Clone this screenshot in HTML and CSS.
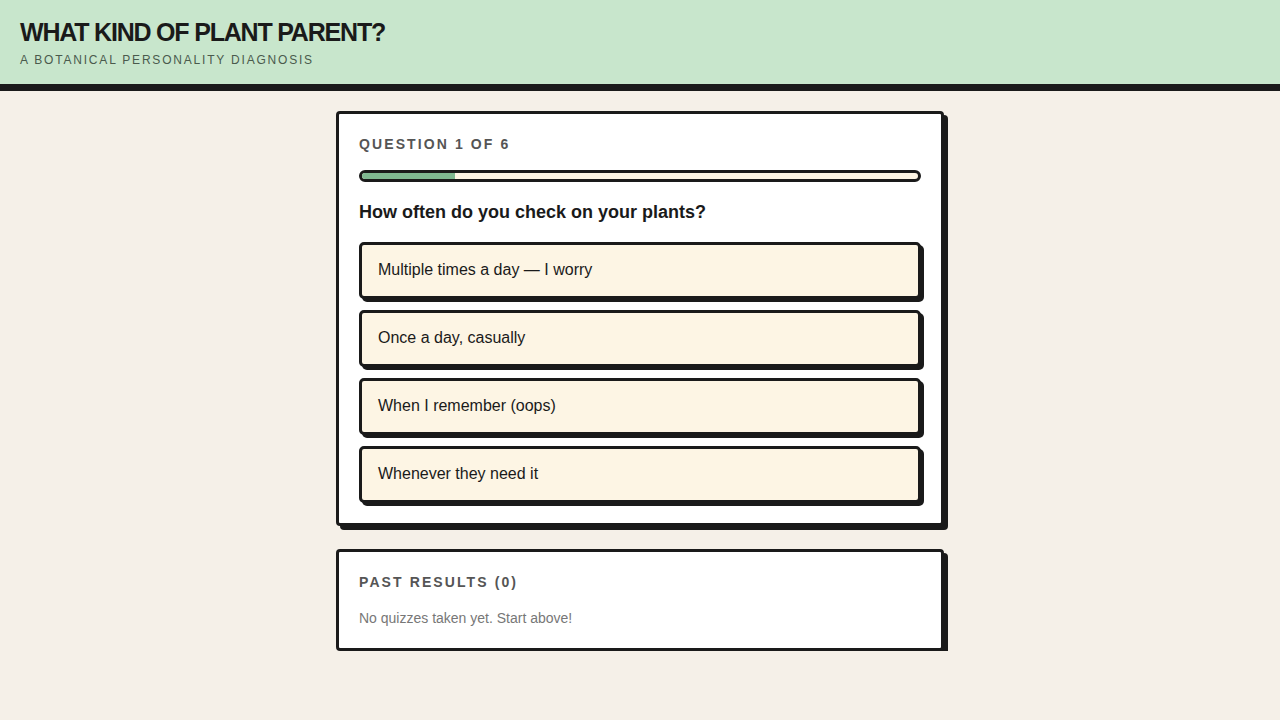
FILE: index.html
```html
<!DOCTYPE html>
<html lang="en">
<head>
<meta charset="utf-8">
<title>What Kind of Plant Parent?</title>
<link rel="stylesheet" href="styles.css">
</head>
<body>
<header class="site-header">
  <h1 class="title">WHAT KIND OF PLANT PARENT?</h1>
  <p class="subtitle">A BOTANICAL PERSONALITY DIAGNOSIS</p>
</header>
<main class="main">
  <section class="card">
    <div class="label">QUESTION 1 OF 6</div>
    <div class="progress"><div class="progress-fill" style="width:16.67%"></div></div>
    <h2 class="question">How often do you check on your plants?</h2>
    <div class="options">
      <button class="option">Multiple times a day — I worry</button>
      <button class="option">Once a day, casually</button>
      <button class="option">When I remember (oops)</button>
      <button class="option">Whenever they need it</button>
    </div>
  </section>
  <section class="card">
    <div class="label">PAST RESULTS (0)</div>
    <p class="empty">No quizzes taken yet. Start above!</p>
  </section>
</main>
</body>
</html>
```

FILE: styles.css
```css
* { box-sizing: border-box; }
html, body { margin: 0; padding: 0; }
body {
  background: #f5f0e8;
  font-family: "Liberation Sans", Arial, sans-serif;
  color: #1a1a1a;
}
.site-header {
  background: #c8e6cc;
  height: 91px;
  border-bottom: 7px solid #1a1a1a;
  padding: 17px 20px 0;
}
.title {
  margin: 0;
  font-size: 25px;
  line-height: 30px;
  font-weight: 700;
  letter-spacing: -1.2px;
  color: #1a1a1a;
}
.subtitle {
  margin: 5px 0 0;
  font-size: 12px;
  line-height: 16px;
  letter-spacing: 1.8px;
  color: #4a5a4c;
}
.main {
  width: 608px;
  margin: 20px auto 0;
  display: flex;
  flex-direction: column;
  gap: 23px;
}
.card {
  background: #ffffff;
  border: 3px solid #1a1a1a;
  border-radius: 4px;
  box-shadow: 4px 4px 0 #1a1a1a;
  padding: 20px;
}
.label {
  font-size: 14px;
  line-height: 20px;
  font-weight: 700;
  letter-spacing: 0.15em;
  color: #555555;
  margin-bottom: 16px;
}
.progress {
  height: 12px;
  border: 3px solid #1a1a1a;
  border-radius: 6px;
  background: #fdf5e4;
  overflow: hidden;
}
.progress-fill {
  height: 100%;
  background: #7fb890;
}
.question {
  margin: 19px 0 19px;
  font-size: 18px;
  line-height: 22px;
  font-weight: 700;
  color: #1a1a1a;
}
.options {
  display: flex;
  flex-direction: column;
  gap: 11px;
}
.option {
  display: block;
  width: 100%;
  text-align: left;
  background: #fdf5e4;
  border: 3px solid #1a1a1a;
  border-radius: 5px;
  box-shadow: 3px 3px 0 #1a1a1a;
  padding: 15px 16px 17px;
  font-family: "Liberation Sans", Arial, sans-serif;
  font-size: 16px;
  line-height: 19px;
  color: #1a1a1a;
  cursor: pointer;
}
.empty {
  margin: 0;
  font-size: 14px;
  line-height: 20px;
  color: #777777;
}
```
